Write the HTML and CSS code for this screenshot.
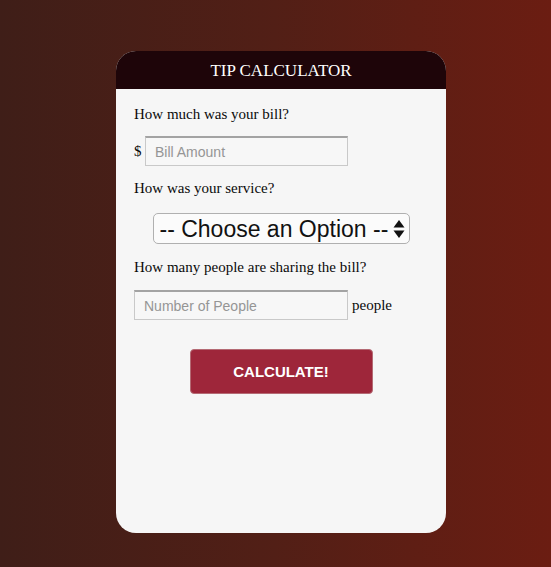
FILE: index.html
```html
<!DOCTYPE html>
<html>
<head>
<meta charset="utf-8">
<link rel="stylesheet" href="styles.css">
</head>
<body>
<div class="card">
  <div class="card-header">TIP CALCULATOR</div>
  <div class="card-body">
    <p class="label label-first">How much was your bill?</p>
    <div class="row row-bill">
      <span class="currency">$</span>
      <input class="field field-bill" type="text" placeholder="Bill Amount">
    </div>
    <p class="label label-service">How was your service?</p>
    <div class="select-wrap">
      <div class="select-box">
        <select class="select">
          <option>-- Choose an Option --</option>
        </select>
        <svg class="select-arrows" width="12" height="20" viewBox="0 0 12 20">
          <path d="M6 1 L11.5 8.5 L0.5 8.5 Z" fill="#111"/>
          <path d="M6 19 L11.5 11.5 L0.5 11.5 Z" fill="#111"/>
        </svg>
      </div>
    </div>
    <p class="label label-people">How many people are sharing the bill?</p>
    <div class="row row-people">
      <input class="field field-people" type="text" placeholder="Number of People">
      <span class="unit">people</span>
    </div>
    <div class="btn-wrap">
      <button class="btn" type="button">CALCULATE!</button>
    </div>
  </div>
</div>
</body>
</html>
```
FILE: styles.css
```css
html, body {
  margin: 0;
  padding: 0;
  height: 100%;
}
body {
  background: linear-gradient(to right, #3f1e18 0%, #521f16 50%, #6b1d12 100%);
  font-family: "Liberation Serif", "Times New Roman", serif;
  color: #0a0a0a;
  overflow: hidden;
}
.card {
  width: 330px;
  margin: 51px 0 0 116px;
  background: #f6f6f6;
  border-radius: 20px;
  overflow: hidden;
  height: 482px;
  display: flex;
  flex-direction: column;
}
.card-header {
  background: #1e0509;
  color: #fff;
  height: 38px;
  line-height: 40px;
  text-align: center;
  font-size: 17px;
  font-family: "Liberation Serif", "Times New Roman", serif;
}
.card-body {
  padding: 16px 18px 0 18px;
  display: flex;
  flex-direction: column;
}
.label {
  margin: 0;
  font-size: 15px;
  line-height: 18px;
}
.row {
  display: flex;
  align-items: center;
}
.row-bill {
  margin-top: 13px;
}
.currency {
  font-size: 15px;
  width: 11px;
}
.field {
  box-sizing: border-box;
  height: 30px;
  border: 1px solid #c9c9c9;
  border-top: 2px solid #a3a3a3;
  background: #f7f7f7;
  padding: 0 9px;
  font-family: "Liberation Sans", Arial, sans-serif;
  font-size: 14px;
  color: #333;
  outline: none;
}
.field::placeholder {
  color: #959595;
}
.field-bill {
  width: 203px;
}
.label-service {
  margin-top: 13px;
}
.select-wrap {
  margin-top: 16px;
  display: flex;
  justify-content: center;
}
.select-box {
  box-sizing: border-box;
  width: 257px;
  height: 31px;
  border: 1px solid #b0b0b0;
  border-radius: 5px;
  background: #fbfbfb;
  display: flex;
  align-items: center;
  padding: 0 4px 0 6px;
}
.select {
  appearance: none;
  -webkit-appearance: none;
  border: none;
  background: transparent;
  font-family: "Liberation Sans", Arial, sans-serif;
  font-size: 23px;
  color: #111;
  flex: 1;
  padding: 0;
  margin: 0;
  outline: none;
}
.select-arrows {
  flex: none;
}
.label-people {
  margin-top: 14px;
}
.row-people {
  margin-top: 14px;
}
.field-people {
  width: 214px;
}
.unit {
  margin-left: 4px;
  font-size: 15px;
}
.btn-wrap {
  margin-top: 29px;
  display: flex;
  justify-content: center;
}
.btn {
  width: 183px;
  height: 45px;
  background: #9e263a;
  border: 1px solid #b46a74;
  border-radius: 4px;
  color: #fff;
  font-family: "Liberation Sans", Arial, sans-serif;
  font-weight: bold;
  font-size: 15px;
  padding: 0;
}
```
